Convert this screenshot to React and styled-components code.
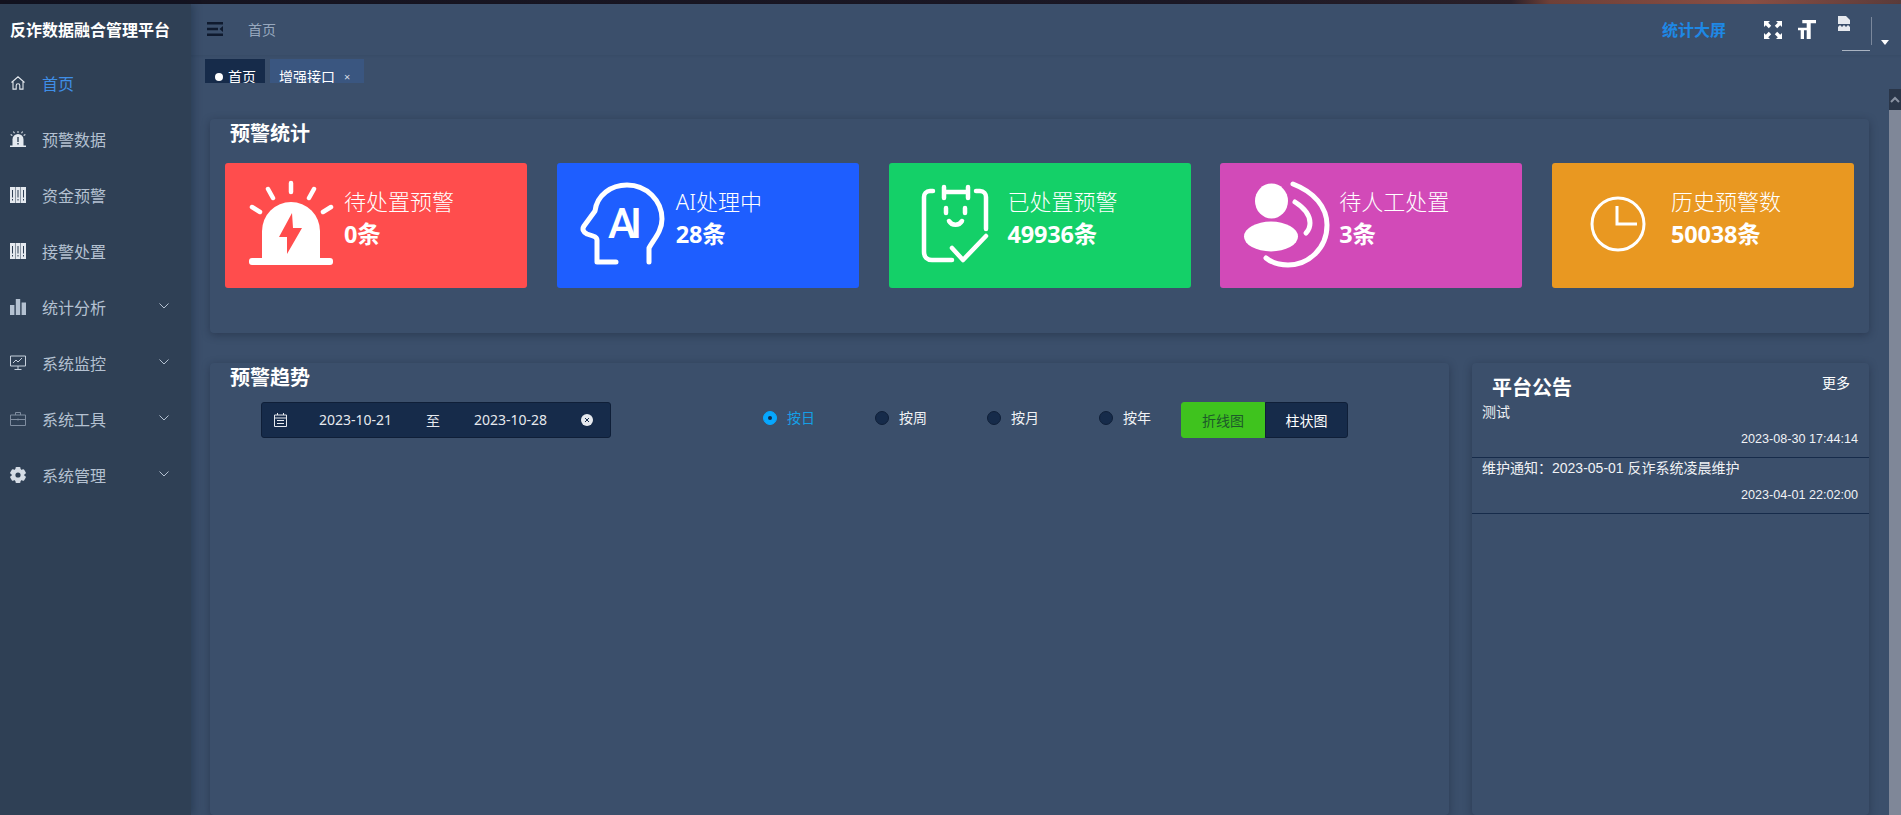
import React from "react";
import styled, { createGlobalStyle } from "styled-components";

const GlobalStyle = createGlobalStyle`
  html, body { margin: 0; padding: 0; height: 100%; overflow: hidden; }
  body { background: #3b4f6b; font-family: "Noto Sans", "Noto Sans CJK SC", sans-serif; }
  * { box-sizing: border-box; }
`

const Page = styled.div`
  width: 1901px;
  height: 815px;
  display: flex;
  flex-direction: column;
  overflow: hidden;
`

const TopStrip = styled.div`
  height: 4px;
  flex: none;
  background: linear-gradient(90deg, #14131f 0%, #1b1825 62%, #2a2029 79.500%, #6e4038 81.500%, #8a4f44 92%, #5a3b3a 100%);
`

const Body = styled.div`
  flex: 1;
  display: flex;
  min-height: 0;
`

const Sidebar = styled.aside`
  width: 191px;
  flex: none;
  background: #2f4055;
  box-shadow: 3px 0 8px rgba(0, 21, 41, 0.28);
  position: relative;
  z-index: 2;
`

const Brand = styled.div`
  height: 51px;
  padding: 0 0 2px 10px;
  display: flex;
  align-items: center;
  color: #fff;
  font-size: 16px;
  font-weight: 700;
  white-space: nowrap;
`

const MenuItem = styled.div`
  height: 56px;
  padding: 0 22px 0 10px;
  display: flex;
  align-items: center;
  font-size: 16px;
  color: ${p => (p.$active ? "#3f8ee6" : "#b4c1d1")};
`

const MenuIcon = styled.span`
  width: 16px;
  height: 16px;
  margin-right: 16px;
  display: flex;
  color: #e4e9ef;
  svg { width: 16px; height: 16px; display: block; }
`

const MenuChevron = styled.svg`
  width: 10px;
  height: 6px;
  margin-left: auto;
  margin-top: -3px;
`

const Main = styled.div`
  flex: 1;
  min-width: 0;
  display: flex;
  flex-direction: column;
`

const Header = styled.header`
  height: 51px;
  flex: none;
  display: flex;
  align-items: center;
  padding: 0 0 2px 16px;
  box-shadow: 0 1px 2px rgba(20, 30, 50, 0.07);
`

const Hamburger = styled.svg`
  width: 16px;
  height: 14px;
`

const Crumb = styled.span`
  margin-left: 25px;
  font-size: 14px;
  color: #97a8be;
`

const HeaderRight = styled.div`
  margin-left: auto;
  display: flex;
  align-items: center;
`

const StatLink = styled.a`
  color: #1e88e5;
  font-size: 16px;
  font-weight: 700;
  margin-right: 38px;
`

const HeaderIcon = styled.svg`
  width: 18px;
  height: ${p => p.$h || 18}px;
  margin: 2px 16px 0 0;
  display: block;
`

const AvatarBox = styled.div`
  position: relative;
  width: 34px;
  height: 28px;
  margin: 4px 29px 0 6px;
  border-right: 1px solid #7b889c;
  svg { display: block; margin-top: -1px; }
`

const AvatarLine = styled.i`
  position: absolute;
  left: 4px;
  bottom: -6px;
  width: 28px;
  height: 1px;
  background: #aab4c2;
`

const Caret = styled.i`
  position: absolute;
  right: -18px;
  bottom: 0;
  border: 4px solid transparent;
  border-top: 5px solid #fff;
  border-bottom: 0;
`

const TabBar = styled.div`
  height: 24px;
  flex: none;
  margin: 4px 0 0 14px;
  display: flex;
  gap: 5px;
  overflow: hidden;
`

const Tab = styled.div`
  width: ${p => p.$w}px;
  height: 34px;
  padding: 10px 0 0 ${p => (p.$active ? 10 : 9)}px;
  display: flex;
  align-items: flex-start;
  background: ${p => (p.$active ? "#162b4a" : "#3a5680")};
  color: #fff;
  font-size: 14px;
  line-height: 16px;
`

const TabDot = styled.i`
  width: 8px;
  height: 8px;
  margin: 4px 5px 0 0;
  border-radius: 50%;
  background: #fff;
`

const TabClose = styled.span`
  margin-left: 9px;
  font-size: 11px;
  color: #d5dce5;
`

const ContentRow = styled.div`
  flex: 1;
  min-height: 0;
  display: flex;
  margin-top: 6px;
`

const Content = styled.main`
  flex: 1;
  min-width: 0;
  padding: 30px 20px 0 19px;
  display: flex;
  flex-direction: column;
  gap: 30px;
`

const Scrollbar = styled.div`
  width: 12px;
  flex: none;
  background: #7f8798;
  display: flex;
  flex-direction: column;
`

const ScrollUp = styled.div`
  height: 21px;
  background: #2a3649;
  display: flex;
  align-items: center;
  justify-content: center;
`

const Panel = styled.section`
  background: #3b4f6b;
  border-radius: 4px;
  box-shadow: 0 2px 8px rgba(20, 28, 45, 0.4);
`

const StatPanel = styled(Panel)`
  height: 214px;
  flex: none;
  padding: 0 15px;
`

const PanelTitle = styled.h2`
  margin: 0;
  padding-left: 5px;
  height: 30px;
  line-height: 30px;
  font-size: 20px;
  font-weight: 700;
  color: #fff;
`

const CardRow = styled.div`
  margin-top: 14px;
  display: flex;
  justify-content: space-between;
`

const Card = styled.div`
  width: 302px;
  height: 125px;
  padding: 12px 0 0 16px;
  border-radius: 3px;
  background: ${p => p.$bg};
  color: #fff;
  display: flex;
`

const CardIcon = styled.svg`
  width: 100px;
  height: 100px;
  flex: none;
  overflow: visible;
`

const CardText = styled.div`
  margin-left: 3px;
  padding-top: 1px;
`

const CardTitle = styled.div`
  font-size: 22px;
  line-height: 32px;
  font-weight: 300;
  margin-top: 9px;
`

const CardValue = styled.div`
  font-size: 23.5px;
  line-height: 32px;
  font-weight: 700;
  margin-top: 1px;
  letter-spacing: -0.2px;
`

const LowerRow = styled.div`
  flex: 1;
  min-height: 0;
  display: flex;
  gap: 23px;
`

const TrendPanel = styled(Panel)`
  flex: 1;
  min-width: 0;
  padding-left: 15px;
`

const Controls = styled.div`
  margin-top: 9px;
  padding-left: 36px;
  display: flex;
  align-items: center;
`

const DatePicker = styled.div`
  width: 350px;
  height: 36px;
  padding: 0 0 1px 12px;
  display: flex;
  align-items: center;
  background: #162b4a;
  border: 1px solid #0f1f38;
  border-radius: 3px;
  color: #e6e9ee;
  font-size: 14px;
`

const DateValue = styled.span`
  width: 74px;
  margin-left: ${p => p.$ml}px;
  white-space: nowrap;
`

const DateSep = styled.span`
  width: 14px;
  margin-left: 33px;
`

const ClearIcon = styled.svg`
  width: 12px;
  height: 12px;
  margin-left: 33px;
`

const RadioGroup = styled.div`
  margin-left: 152px;
  display: flex;
`

const RadioItem = styled.label`
  width: 112px;
  height: 18px;
  margin-top: -4px;
  display: flex;
  align-items: center;
  font-size: 14px;
  line-height: 18px;
  color: ${p => (p.$on ? "#159fe6" : "#f0f2f5")};
  &:last-child { width: 82px; }
`

const RadioDot = styled.i`
  width: 14px;
  height: 14px;
  margin-right: 10px;
  border-radius: 50%;
  background: ${p => (p.$on ? "#06a7ff" : "#162b4a")};
  border: 1px solid ${p => (p.$on ? "#06a7ff" : "#0f1f38")};
  display: flex;
  align-items: center;
  justify-content: center;
  &::after {
    content: "";
    width: 4px;
    height: 4px;
    border-radius: 50%;
    background: ${p => (p.$on ? "#162b4a" : "transparent")};
  }
`

const ChartSwitch = styled.div`
  display: flex;
  height: 36px;
`

const ChartButton = styled.button`
  width: ${p => p.$w}px;
  height: 36px;
  padding: 0;
  border: 1px solid ${p => (p.$on ? "#3fc31e" : "#0f1f38")};
  border-radius: ${p => (p.$on ? "3px 0 0 3px" : "0 3px 3px 0")};
  background: ${p => (p.$on ? "#3fc31e" : "#162b4a")};
  color: ${p => (p.$on ? "#1d5a2a" : "#fff")};
  font-family: inherit;
  font-size: 14px;
`

const NoticePanel = styled(Panel)`
  width: 397px;
  flex: none;
  font-family: "Liberation Sans", "Noto Sans CJK SC", sans-serif;
  color: #f0f2f5;
`

const NoticeHead = styled.div`
  height: 39px;
  padding: 10px 19px 0 20px;
  display: flex;
  justify-content: space-between;
`

const NoticeTitle = styled.h3`
  margin: 0;
  font-size: 20px;
  line-height: 30px;
  font-weight: 700;
  color: #fff;
`

const NoticeMore = styled.a`
  font-size: 14px;
  line-height: 20px;
  color: #fff;
`

const NoticeItem = styled.div`
  height: 56px;
  padding: 0 11px 0 10px;
  border-bottom: 1px solid #162b4a;
  font-size: 14px;
`

const NoticeText = styled.div`
  line-height: 20px;
`

const NoticeTime = styled.div`
  margin-top: 9px;
  text-align: right;
  font-size: 12.6px;
  line-height: 16px;
`

const HomeIcon = () => (
  <svg viewBox="0 0 16 16" fill="none" stroke="currentColor" strokeWidth="1.1">
    <path d="M1.5 7.5 8 1.8l6.5 5.7M3 6.5v7.6h3.2v-3.600a1.800 1.800 0 0 1 3.600 0v3.600H13V6.500" />
  </svg>
)

const AlarmIcon = () => (
  <svg viewBox="0 0 16 16" fill="currentColor">
    <path d="M2.500 15V8.500a5.500 5.500 0 0 1 11 0V15z" />
    <path d="M0 14.400h16V16H0zM7.500 0h1v2h-1zM3 .8l.9-.5 1 1.700-.9.500zM13 .8l-.9-.5-1 1.700.9.500zM.4 4l.5-.9 1.700 1-.5.900zM15.600 4l-.5-.9-1.700 1 .5.900z" />
    <path d="M7.300 6h1.400v5H7.300zM7.300 12h1.400v1.500H7.300z" fill="#2f4055" />
  </svg>
)

const BooksIcon = () => (
  <svg viewBox="0 0 16 16" fill="currentColor">
    <path d="M0 0h5v16H0zM5.500 0h5v16h-5zM11 0h5v16h-5z" />
    <path d="M2 3h1v7.500H2zM2 12h1v1.500H2zM7.500 3h1v7.500h-1zM7.500 12h1v1.500h-1zM13 3h1v7.500h-1zM13 12h1v1.500h-1z" fill="#2f4055" />
  </svg>
)

const BarsIcon = () => (
  <svg viewBox="0 0 16 16" fill="#b4c1d1">
    <path d="M0 6h4.400v10H0zM5.800 0h4.400v16H5.800zM11.600 3.500H16V16h-4.400z" />
  </svg>
)

const MonitorIcon = () => (
  <svg viewBox="0 0 16 16" fill="none" stroke="#c6d0dc" strokeWidth="1">
    <path d="M.5 1h15v10h-15zM8 11v3.500M4.500 14.500h7M3 8l3-3 2 2 4-4" />
  </svg>
)

const CaseIcon = () => (
  <svg viewBox="0 0 16 16" fill="none" stroke="#7f8da0" strokeWidth="1">
    <path d="M.5 4h15v10.500H.5zM5.500 4V1.500h5V4M.5 8.500h15M8 7.500v2" />
  </svg>
)

const GearIcon = () => (
  <svg viewBox="0 0 16 16" fill="#d5dce5">
    <circle cx="8" cy="8" r="6.400" />
    <rect x="5.500" y="0" width="5" height="16" rx="1" />
    <rect x="5.500" y="0" width="5" height="16" rx="1" transform="rotate(60 8 8)" />
    <rect x="5.500" y="0" width="5" height="16" rx="1" transform="rotate(120 8 8)" />
    <circle cx="8" cy="8" r="2.600" fill="#2f4055" />
  </svg>
)

const menu = [
  { label: "首页", icon: <HomeIcon />, active: true },
  { label: "预警数据", icon: <AlarmIcon /> },
  { label: "资金预警", icon: <BooksIcon /> },
  { label: "接警处置", icon: <BooksIcon /> },
  { label: "统计分析", icon: <BarsIcon />, sub: true },
  { label: "系统监控", icon: <MonitorIcon />, sub: true },
  { label: "系统工具", icon: <CaseIcon />, sub: true },
  { label: "系统管理", icon: <GearIcon />, sub: true },
]

const AlarmCard = () => (
  <CardIcon viewBox="0 0 100 100">
    <g stroke="#fff" strokeWidth="4.500" strokeLinecap="round">
      <path d="M50 8v9M27 14l5 9M73 14l-5 9M11 32l8 5M90 32l-8 5" />
    </g>
    <path d="M21 84V56a29 29 0 0 1 58 0v28z" fill="#fff" />
    <rect x="8" y="83" width="84" height="7" rx="3" fill="#fff" />
    <path d="M51 38 38 62h8l0 17 15-26h-9z" fill="#ff4d4d" />
  </CardIcon>
)

const HeadCard = () => (
  <CardIcon viewBox="0 0 100 100">
    <path d="M43 87H24V65c0-2-1-3-4-4l-6-2c-4-2-5-5-3-8l11-15C24 20 38 10 54 10c20 0 35 16 35 34 0 12-8 20-13 29v14" fill="none" stroke="#fff" strokeWidth="5" strokeLinecap="round" strokeLinejoin="round" />
    <text x="52" y="63" textAnchor="middle" fontFamily="Roboto, sans-serif" fontWeight="500" fontSize="42" fill="#fff" textLength="34" lengthAdjust="spacing">AI</text>
  </CardIcon>
)

const ClipboardCard = () => (
  <CardIcon viewBox="0 0 100 100">
    <g fill="none" stroke="#fff" strokeWidth="4.500" strokeLinecap="round" strokeLinejoin="round">
      <path d="M28 16h-3c-4 0-6 3-6 6v55c0 5 3 8 8 8h20" />
      <path d="M71 16h4c4 0 6 3 6 6v32" />
      <path d="M39 12v11M63 12v11M39 17h24" />
      <path d="M41 33v5M60 33v5" />
      <path d="M44 46c3 5 10 5 13 0" />
      <path d="M47 73l11 12 23-24" />
    </g>
  </CardIcon>
)

const PersonCard = () => (
  <CardIcon viewBox="0 0 100 100">
    <ellipse cx="35.500" cy="26" rx="16.500" ry="17.500" fill="#fff" />
    <ellipse cx="35" cy="61.500" rx="27" ry="15" fill="#fff" />
    <g fill="none" stroke="#fff" strokeWidth="5" strokeLinecap="round">
      <path d="M57 9c21 8 34 23 34 41 0 24-19 40-39 40-8 0-16-2-22-7" />
      <path d="M59 27c11 7 15 15 15 21 0 4-1 7-4 10" />
    </g>
  </CardIcon>
)

const ClockCard = () => (
  <CardIcon viewBox="0 0 100 100">
    <g fill="none" stroke="#fff" strokeWidth="3">
      <circle cx="50" cy="49" r="26" />
      <path d="M49 31v18h20" />
    </g>
  </CardIcon>
)

const cards = [
  { bg: "#ff4d4d", title: "待处置预警", value: "0条", Icon: AlarmCard },
  { bg: "#1e5eff", title: "AI处理中", value: "28条", Icon: HeadCard },
  { bg: "#14d068", title: "已处置预警", value: "49936条", Icon: ClipboardCard },
  { bg: "#d24ab8", title: "待人工处置", value: "3条", Icon: PersonCard },
  { bg: "#e99821", title: "历史预警数", value: "50038条", Icon: ClockCard },
]

const notices = [
  { text: "测试", time: "2023-08-30 17:44:14" },
  { text: "维护通知：2023-05-01 反诈系统凌晨维护", time: "2023-04-01 22:02:00" },
]

export default function App() {
  return (
    <Page>
      <GlobalStyle />
      <TopStrip />
      <Body>
        <Sidebar>
          <Brand>反诈数据融合管理平台</Brand>
          {menu.map(m => (
            <MenuItem key={m.label} $active={m.active}>
              <MenuIcon>{m.icon}</MenuIcon>
              {m.label}
              {m.sub && (
                <MenuChevron viewBox="0 0 10 6" fill="none" stroke="#b4c1d1" strokeWidth="1">
                  <path d="M.5.5 5 5 9.500.5" />
                </MenuChevron>
              )}
            </MenuItem>
          ))}
        </Sidebar>
        <Main>
          <Header>
            <Hamburger viewBox="0 0 16 14" fill="#0f1a2e">
              <path d="M0 0h16v2.500H0zM0 5.700h11v2.500H0zM0 11.500h16V14H0zM16 4v6l-3.500-3z" />
            </Hamburger>
            <Crumb>首页</Crumb>
            <HeaderRight>
              <StatLink>统计大屏</StatLink>
              <HeaderIcon viewBox="0 0 18 18" fill="#fff">
                <path d="M0 0h6L4.200 1.800 7.200 4.800 4.800 7.200 1.800 4.200 0 6zM18 0v6l-1.800-1.800-3 3-2.400-2.400 3-3L12 0zM0 18v-6l1.800 1.800 3-3 2.400 2.400-3 3L6 18zM18 18h-6l1.800-1.800-3-3 2.400-2.400 3 3L18 12z" />
              </HeaderIcon>
              <HeaderIcon $h={19} viewBox="0 0 18 19" fill="#fff">
                <path d="M4.300 0H18v3.300h-5.300V19H8.700V3.300H4.300zM0 7.700h9v2.600H6V19H2.700v-8.700H0z" />
              </HeaderIcon>
              <AvatarBox>
                <svg width="12" height="15" viewBox="0 0 12 15" fill="#e6e9ee">
                  <path d="M0 0h8l4 4v4H0zM0 11l2-2 2 2 2-2 2 2 2-2 2 2v4H0z" />
                </svg>
                <AvatarLine />
                <Caret />
              </AvatarBox>
            </HeaderRight>
          </Header>
          <TabBar>
            <Tab $w={60} $active>
              <TabDot />首页
            </Tab>
            <Tab $w={94}>
              增强接口<TabClose>×</TabClose>
            </Tab>
          </TabBar>
          <ContentRow>
            <Content>
              <StatPanel>
                <PanelTitle>预警统计</PanelTitle>
                <CardRow>
                  {cards.map(c => (
                    <Card key={c.title} $bg={c.bg}>
                      <c.Icon />
                      <CardText>
                        <CardTitle>{c.title}</CardTitle>
                        <CardValue>{c.value}</CardValue>
                      </CardText>
                    </Card>
                  ))}
                </CardRow>
              </StatPanel>
              <LowerRow>
                <TrendPanel>
                  <PanelTitle>预警趋势</PanelTitle>
                  <Controls>
                    <DatePicker>
                      <svg width="13" height="14" viewBox="0 0 13 14" fill="none" stroke="#e6e9ee" strokeWidth="1">
                        <path d="M.5 2h12v11.500H.5zM.5 5h12M3.500 0v2M9.500 0v2M3 7.500h7M3 10.500h7" />
                      </svg>
                      <DateValue $ml={32}>2023-10-21</DateValue>
                      <DateSep>至</DateSep>
                      <DateValue $ml={34}>2023-10-28</DateValue>
                      <ClearIcon viewBox="0 0 12 12">
                        <circle cx="6" cy="6" r="6" fill="#e6e9ee" />
                        <path d="M4 4l4 4M8 4l-4 4" stroke="#162b4a" strokeWidth="1" />
                      </ClearIcon>
                    </DatePicker>
                    <RadioGroup>
                      {["按日", "按周", "按月", "按年"].map((r, i) => (
                        <RadioItem key={r} $on={i === 0}>
                          <RadioDot $on={i === 0} />
                          {r}
                        </RadioItem>
                      ))}
                    </RadioGroup>
                    <ChartSwitch>
                      <ChartButton $w={84} $on>折线图</ChartButton>
                      <ChartButton $w={83}>柱状图</ChartButton>
                    </ChartSwitch>
                  </Controls>
                </TrendPanel>
                <NoticePanel>
                  <NoticeHead>
                    <NoticeTitle>平台公告</NoticeTitle>
                    <NoticeMore>更多</NoticeMore>
                  </NoticeHead>
                  {notices.map(n => (
                    <NoticeItem key={n.time}>
                      <NoticeText>{n.text}</NoticeText>
                      <NoticeTime>{n.time}</NoticeTime>
                    </NoticeItem>
                  ))}
                </NoticePanel>
              </LowerRow>
            </Content>
            <Scrollbar>
              <ScrollUp>
                <svg width="10" height="7" viewBox="0 0 10 7" fill="none" stroke="#8a93a3" strokeWidth="2">
                  <path d="M1 6l4-4 4 4" />
                </svg>
              </ScrollUp>
            </Scrollbar>
          </ContentRow>
        </Main>
      </Body>
    </Page>
  );
}
